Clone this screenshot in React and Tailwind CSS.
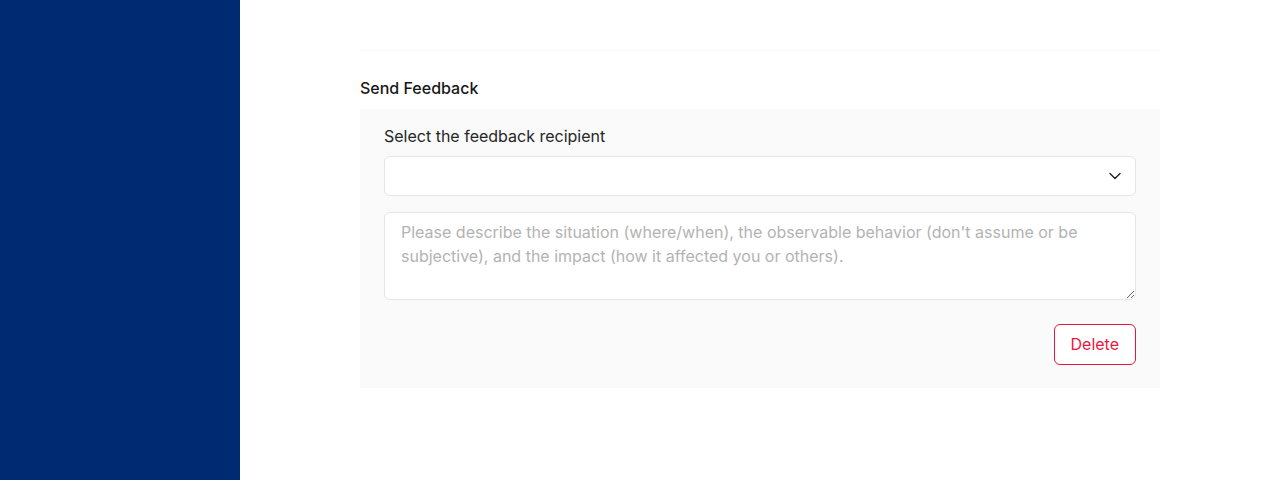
import { ChevronDown } from "lucide-react";

export default function App() {
  return (
    <div
      className="flex h-[480px] w-full bg-white"
      style={{ fontFamily: "Inter, 'Noto Sans', sans-serif" }}
    >
      <aside className="w-[240px] shrink-0 bg-[#002b72]" />
      <main className="flex-1">
        <div className="mx-auto w-[800px] pt-[50px]">
          <div className="h-px rounded bg-[#fafafa]" />
          <h2 className="mt-[27px] text-[16px] font-medium leading-5 text-[#171717]">
            Send Feedback
          </h2>
          <div className="mt-[11px] bg-[#fafafa] px-6 pb-[23px] pt-[15px]">
            <label className="block text-[16px] leading-6 text-[#262626]">
              Select the feedback recipient
            </label>
            <div className="relative mt-[8px]">
              <select className="h-10 w-full appearance-none rounded-md border border-[#e5e5e5] bg-white px-4 text-[16px] outline-none">
                <option value=""></option>
              </select>
              <ChevronDown
                size={20}
                strokeWidth={1.75}
                className="pointer-events-none absolute right-[11px] top-[10px] text-[#262626]"
              />
            </div>
            <textarea
              className="mt-4 block h-[88px] w-full resize-y rounded-md border border-[#e5e5e5] bg-white px-4 py-[7px] text-[16px] leading-6 text-[#262626] outline-none placeholder:text-[#b3b3b3]"
              placeholder="Please describe the situation (where/when), the observable behavior (don't assume or be subjective), and the impact (how it affected you or others)."
            />
            <div className="mt-6 flex justify-end">
              <button className="h-[41px] rounded-md border border-[#e8163f] bg-white px-4 pb-px text-[16px] text-[#e8163f]">
                Delete
              </button>
            </div>
          </div>
        </div>
      </main>
    </div>
  );
}
